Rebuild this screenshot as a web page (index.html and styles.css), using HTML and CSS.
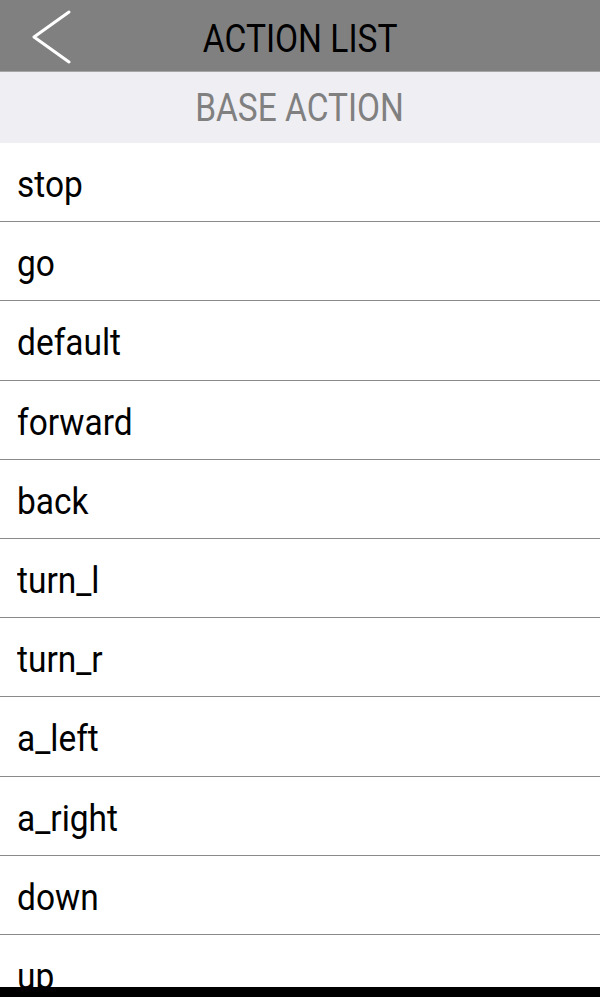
FILE: index.html
```html
<!DOCTYPE html>
<html lang="en">
<head>
  <meta charset="UTF-8"/>
  <meta name="viewport" content="width=device-width,initial-scale=1"/>
  <title>Action List</title>
  <link rel="stylesheet" href="styles.css">
</head>
<body>
  <!-- Top bar -->
  <header class="topbar">
    <button class="back" aria-label="Back">
      <svg width="42" height="54" viewBox="0 0 42 54">
        <polyline points="38,2 3,27 38,52" fill="none" stroke="#fff" stroke-width="3" stroke-linecap="round" stroke-linejoin="round"/>
      </svg>
    </button>
    <h1 class="title"><span>ACTION LIST</span></h1>
  </header>

  <!-- Section label -->
  <div class="section-label"><span>BASE ACTION</span></div>

  <!-- Action rows -->
  <ul class="actions">
    <li><span>stop</span></li>
    <li><span>go</span></li>
    <li><span>default</span></li>
    <li><span>forward</span></li>
    <li><span>back</span></li>
    <li><span>turn_l</span></li>
    <li><span>turn_r</span></li>
    <li><span>a_left</span></li>
    <li><span>a_right</span></li>
    <li><span>down</span></li>
    <li><span>up</span></li>
  </ul>

  <!-- System bar -->
  <footer class="sysbar"></footer>
</body>
</html>
```

FILE: styles.css
```css
/* Reset */
* { box-sizing: border-box; margin: 0; padding: 0; }
html, body { height: 100%; }
body { font-family: Roboto, "Noto Sans", sans-serif; background: #fff; color: #000; display: flex; flex-direction: column; overflow: hidden; }

/* Text in this app is drawn slightly condensed */
.title span, .section-label span, .actions span { display: inline-block; transform-origin: center; }

/* Top bar */
.topbar { height: 72px; flex: none; background: #808080; border-bottom: 1px solid #a6a6a6; position: relative; display: flex; align-items: center; justify-content: center; padding-top: 6px; }
.back { position: absolute; left: 31px; top: 10px; background: none; border: none; cursor: pointer; }
.back svg { display: block; }
.title { font-size: 39px; font-weight: 400; color: #000; }
.title span { transform: scaleX(0.86); }

/* Section label */
.section-label { height: 71px; flex: none; background: #efeef3; color: #808080; font-size: 38px; display: flex; align-items: center; justify-content: center; }
.section-label span { transform: scaleX(0.88); }

/* List rows */
.actions { list-style: none; flex: 1; overflow: hidden; }
.actions li { height: 79.2px; border-bottom: 1.2px solid #8a8a8a; display: flex; align-items: center; padding-left: 17px; font-size: 36px; padding-top: 6px; }
.actions span { transform: scaleX(0.93); transform-origin: left center; }

/* Bottom system strip */
.sysbar { height: 10px; flex: none; background: #000; }
```
